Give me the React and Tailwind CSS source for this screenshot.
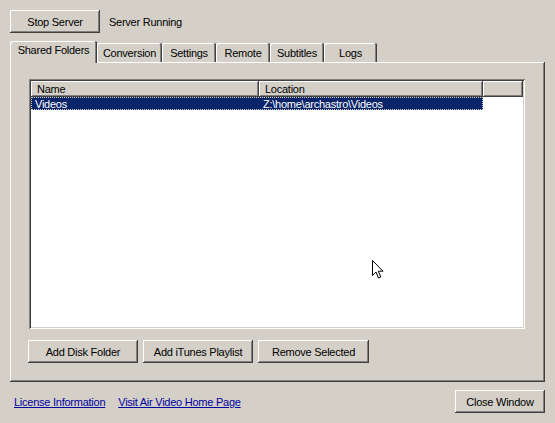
import { useState } from 'react'

const TABS = [
  { label: 'Shared Folders', w: 'w-[87px]' },
  { label: 'Conversion', w: 'w-[65px]' },
  { label: 'Settings', w: 'w-[54px]' },
  { label: 'Remote', w: 'w-[54px]' },
  { label: 'Subtitles', w: 'w-[54px]' },
  { label: 'Logs', w: 'w-[53px]' },
]

const raised =
  'bg-[#d4d0c8] shadow-[inset_-1px_-1px_#404040,inset_1px_1px_#ffffff,inset_-2px_-2px_#808080]'

function Button({ children, className = '' }) {
  return (
    <button className={`h-[23px] pt-[1px] text-[11px] tracking-[-0.25px] text-black ${raised} ${className}`}>
      {children}
    </button>
  )
}

function Cursor() {
  return (
    <svg
      className="absolute left-[371px] top-[259px]"
      width="13"
      height="21"
      viewBox="0 0 13 21"
    >
      <path
        d="M1.5 1.5 L1.5 16.5 L5 13 L7.5 19 L9.8 18 L7.3 12.2 L12 12.2 Z"
        fill="#fff"
        stroke="#000"
        strokeWidth="1"
        strokeLinejoin="miter"
      />
    </svg>
  )
}

export default function App() {
  const [tab, setTab] = useState(0)

  return (
    <div
      className="relative w-[555px] h-[423px] bg-[#d4d0c8] text-[11px] tracking-[-0.25px] text-black overflow-hidden"
      style={{ fontFamily: '"Liberation Sans", Arial, sans-serif' }}
    >
      {/* Server status */}
      <div className="flex items-center pt-[10px] pl-[10px]">
        <Button className="w-[90px]">Stop Server</Button>
        <span className="ml-[9px] pt-[1px]">Server Running</span>
      </div>

      {/* Tabs */}
      <div className="flex items-end h-[21px] mt-[8px] pl-[10px]">
        {TABS.map((t, i) => (
          <button
            key={t.label}
            onClick={() => setTab(i)}
            className={`${t.w} rounded-t-[2px] bg-[#d4d0c8] text-[11px] tracking-[-0.25px] leading-none shadow-[inset_-1px_0_#404040,inset_1px_1px_#ffffff,inset_-2px_0_#808080] ${
              tab === i ? 'relative z-10 h-[22px] -mb-[1px] pb-[3px]' : 'h-[19px] pt-[1px]'
            }`}
          >
            {t.label}
          </button>
        ))}
      </div>

      {/* Panel */}
      <div
        className={`ml-[10px] w-[535px] h-[320px] pt-[17px] pl-[19px] ${raised}`}
      >
        {/* List view */}
        <div className="w-[496px] h-[250px] bg-white p-[2px] shadow-[inset_1px_1px_#808080,inset_-1px_-1px_#ffffff,inset_2px_2px_#404040,inset_-2px_-2px_#d4d0c8]">
          <div className="flex h-[16px]">
            <div className={`w-[228px] pl-[6px] pt-[1px] flex items-center ${raised}`}>Name</div>
            <div className={`w-[224px] pl-[6px] pt-[1px] flex items-center ${raised}`}>Location</div>
            <div className={`flex-1 ${raised}`} />
          </div>
          <div className="flex h-[13px] w-[452px] bg-[#0a246a] text-white outline outline-1 outline-dotted outline-[#d4d0c8] -outline-offset-1 leading-[14px]">
            <div className="w-[228px] pl-[4px]">Videos</div>
            <div className="w-[224px] pl-[4px]">Z:\home\archastro\Videos</div>
          </div>
        </div>

        {/* Actions */}
        <div className="flex gap-[5px] mt-[11px] -ml-[1px]">
          <Button className="w-[110px]">Add Disk Folder</Button>
          <Button className="w-[110px]">Add iTunes Playlist</Button>
          <Button className="w-[111px]">Remove Selected</Button>
        </div>
      </div>

      {/* Footer */}
      <div className="flex items-center justify-between mt-[8px] pl-[14px] pr-[10px]">
        <div className="flex gap-[13px] pt-[2px]">
          <a className="underline text-[#0000a0] cursor-pointer">License Information</a>
          <a className="underline text-[#0000a0] cursor-pointer">Visit Air Video Home Page</a>
        </div>
        <Button className="w-[90px] h-[23px]">Close Window</Button>
      </div>

      <Cursor />
    </div>
  )
}
